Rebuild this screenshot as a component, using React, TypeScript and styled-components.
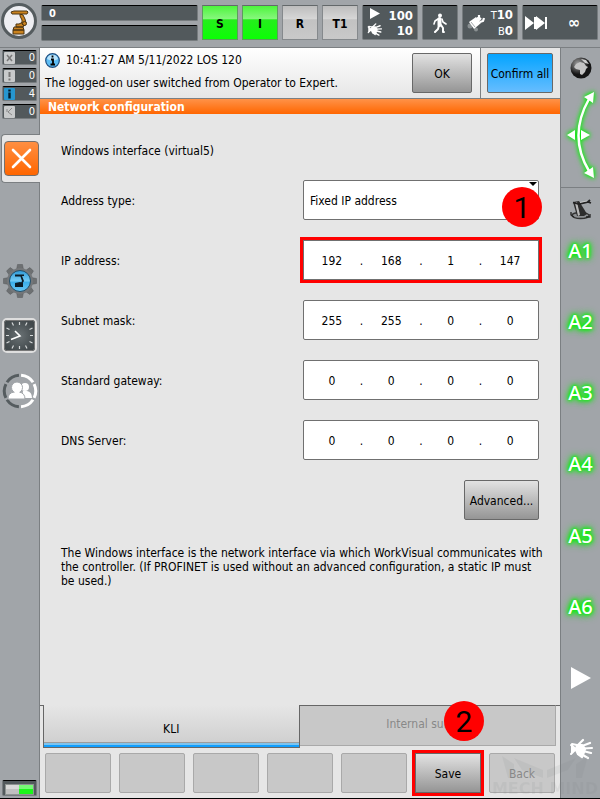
import React from "react";
import styled, { createGlobalStyle, css } from "styled-components";

const GlobalStyle = createGlobalStyle`
  * { box-sizing: border-box; }
  body {
    margin: 0;
    background: #a1a5a9;
    color: #000;
    font: 12px/14px "DejaVu Sans Condensed", "DejaVu Sans", sans-serif;
  }
  button, input, select { font: inherit; color: inherit; margin: 0; }
  svg { display: block; flex: none; }
`;

/* ---------- frame ---------- */

const Page = styled.div`
  display: flex;
  flex-direction: column;
  min-height: 100vh;
  border-bottom: 1px solid #000;
`;

const TopBar = styled.header`
  display: flex;
  align-items: flex-start;
  gap: 4px;
  padding: 5px 2px 6px;
  border-bottom: 1px solid #7b7f82;
`;

const Body = styled.div`
  display: flex;
  flex: 1;
`;

/* ---------- status bar ---------- */

const HomeButton = styled.button`
  width: 36px;
  height: 36px;
  margin: -2px 0 0 -1px;
  padding: 0;
  border: 3px solid #555c5f;
  border-radius: 50%;
  background: #eeeef2;
`;

const darkPanel = css`
  background: #52595c;
  border: 1px solid #777c7f;
  border-top: 1px solid #000;
  border-radius: 2px;
  color: #fff;
`;

const Submit = styled.div`
  display: flex;
  flex: 1;
  flex-direction: column;
  gap: 4px;
`;

const SubmitLine = styled.div`
  ${darkPanel}
  height: 16px;
  padding-left: 7px;
  font-weight: bold;
  font-size: 11px;
  line-height: 15px;
`;

const StateButton = styled.button<{ $on?: boolean }>`
  width: 36px;
  height: 35px;
  padding: 2px 0 0;
  border: 1px solid ${(p) => (p.$on ? "#5f9a5f" : "#85898c")};
  border-top-color: #63686a;
  background: ${(p) =>
    p.$on
      ? "linear-gradient(#4df53c 0%, #86f77c 38%, #25ee1c 42%, #0cff06 100%)"
      : "linear-gradient(#bdbdbd 0%, #d6d6d6 38%, #c2c2c2 42%, #c9c9c9 100%)"};
  font-weight: bold;
`;

const StatusPanel = styled.button<{ $w: number }>`
  ${darkPanel}
  display: flex;
  align-items: center;
  justify-content: space-between;
  width: ${(p) => p.$w}px;
  height: 35px;
  padding: 0 4px;
  font-weight: bold;
`;

const Centered = styled(StatusPanel)`
  justify-content: center;
`;

const JogPanel = styled(StatusPanel)`
  padding: 0 17px 0 2px;
  font-size: 16px;
`;

const Pair = styled.span`
  display: flex;
  flex-direction: column;
  align-items: flex-end;
  line-height: 15px;
  font-size: 13px;

  small { font-size: 11px; font-weight: normal; }
`;

const IconStack = styled.span`
  display: flex;
  flex-direction: column;
  align-items: center;
  gap: 3px;
`;

/* ---------- left column ---------- */

const LeftBar = styled.aside`
  display: flex;
  flex-direction: column;
  width: 40px;
  padding: 2px 0;
  border-right: 1px solid #7b7f82;
`;

const Counters = styled.div`
  display: flex;
  flex-direction: column;
  gap: 3px;
  padding: 0 2px;
`;

const Counter = styled.div`
  ${darkPanel}
  display: flex;
  justify-content: space-between;
  align-items: center;
  height: 15px;
  padding-right: 1px;
  font-size: 11px;
`;

const CloseTab = styled.div`
  margin: 15px -1px 0 1px;
  padding: 6px 0 6px 2px;
  border: 1px solid #7b7f82;
  border-right: 0;
  border-radius: 4px 0 0 4px;
  background: #e6e6e6;
`;

const CloseButton = styled.button`
  display: grid;
  place-items: center;
  width: 35px;
  height: 35px;
  padding: 0;
  border: 1px solid #76706c;
  border-radius: 4px;
  background: linear-gradient(#ff8f42, #ff6600);
`;

const SideIcons = styled.nav`
  display: flex;
  flex-direction: column;
  align-items: center;
  gap: 20px;
  padding: 81px 0 0;
`;

const IconButton = styled.button`
  display: grid;
  place-items: center;
  padding: 0;
  border: 0;
  background: none;
`;

const Charge = styled.div`
  ${darkPanel}
  height: 16px;
  margin: auto 2px 0;
  padding: 3px 2px;

  &::before {
    content: "";
    display: block;
    height: 9px;
    border: 1px solid #8d9391;
    background: linear-gradient(#fff6 40%, #fff0 50%), linear-gradient(90deg, #c0c0c0 50%, #1bf51b 50%);
  }
`;

/* ---------- centre ---------- */

const Main = styled.main`
  display: flex;
  flex: 1;
  flex-direction: column;
  min-width: 0;
  background: #e6e6e6;
`;

const MessageBar = styled.section`
  display: flex;
  border-bottom: 1px solid #7b7f82;
  background: linear-gradient(#fff, #e6e6e6);
`;

const Message = styled.div`
  flex: 1;
  padding: 4px 5px 0;
  line-height: 23px;
`;

const MessageTime = styled.div`
  display: flex;
  align-items: center;
  gap: 6px;
  height: 17px;
  margin-bottom: 3px;
`;

const MessageAction = styled.div<{ $divided?: boolean }>`
  padding: 5px ${(p) => (p.$divided ? 7 : 8)}px 5px 6px;
  border-left: ${(p) => (p.$divided ? "1px solid #7b7f82" : "0")};
  background: ${(p) => (p.$divided ? "#e6e6e6" : "none")};
`;

const Button = styled.button<{ $w?: number; $tone?: "blue" | "flat"; $marked?: boolean }>`
  width: ${(p) => (p.$w ? `${p.$w}px` : "auto")};
  height: 40px;
  padding: 2px 0 0;
  border: 1px solid #686868;
  border-radius: ${(p) => (p.$marked ? 0 : 2)}px;
  background: linear-gradient(#e2e2e2, #959595);
  ${(p) => p.$tone === "blue" && css`background: linear-gradient(#04a4ff, #66bdff);`}
  ${(p) =>
    p.$tone === "flat" &&
    css`
      border-color: #a9a9a9;
      background: #c8c8c8;
      color: #888;
    `}
  ${(p) => p.$marked && css`box-shadow: 0 0 0 3px #f00;`}
`;

const Title = styled.h1`
  margin: 0;
  padding: 1px 8px 0;
  background: linear-gradient(#ff9248, #ff6600);
  color: #fff;
  font-size: 12px;
  line-height: 14px;
`;

const Form = styled.form`
  display: flex;
  flex: 1;
  flex-direction: column;
  gap: 20px;
  padding: 30px 21px 20px;
`;

const Heading = styled.h2`
  margin: 0 0 2px;
  font-size: 12px;
  font-weight: normal;
  line-height: 14px;
`;

const Row = styled.div`
  display: flex;
  align-items: center;
  justify-content: space-between;
`;

const Label = styled.label`
  padding-top: 2px;
`;

const Field = styled.div`
  position: relative;
  width: 236px;
`;

const fieldBox = css`
  width: 100%;
  height: 40px;
  border: 1px solid #707070;
  border-radius: 2px;
  background: #fff;
`;

const Select = styled.select`
  ${fieldBox}
  appearance: none;
  display: block;
  padding: 2px 6px 0;
`;

const Caret = styled.svg`
  position: absolute;
  top: 2px;
  right: 2px;
`;

const Address = styled.div<{ $marked?: boolean }>`
  ${fieldBox}
  display: grid;
  grid-template-columns: repeat(7, 1fr);
  align-items: center;
  padding: 2px 13px 0;
  text-align: center;
  ${(p) =>
    p.$marked &&
    css`
      border-radius: 0;
      box-shadow: 0 0 0 3px #f00;
    `}
`;

const Octet = styled.input`
  width: 100%;
  min-width: 0;
  padding: 0;
  border: 0;
  background: none;
  text-align: center;
`;

const Actions = styled.div`
  display: flex;
  justify-content: flex-end;
`;

const Note = styled.p`
  margin: 6px -6px 0 0;
`;

const StepBadge = styled.span<{ $top: number; $right: number }>`
  position: absolute;
  top: ${(p) => p.$top}px;
  right: ${(p) => p.$right}px;
  z-index: 1;
  width: 40px;
  height: 40px;
  border-radius: 50%;
  background: #f00;
  color: #000;
  font: 30px/42px Roboto, sans-serif;
  text-align: center;
`;

const Tabs = styled.div`
  display: flex;
  align-items: flex-start;
  padding: 0 4px 0 3px;
  background: linear-gradient(#666, #666) 0 0 / 3px 1px no-repeat,
    linear-gradient(#666, #666) 100% 0 / 4px 1px no-repeat;
`;

const Tab = styled.button<{ $active?: boolean }>`
  flex: 1;
  height: 41px;
  padding: 0 0 4px;
  border: 1px solid #a9a9a9;
  border-top-color: #666;
  border-left: 0;
  background: #c8c8c8;
  color: #888;
  ${(p) =>
    p.$active &&
    css`
      height: 43px;
      padding: 5px 0 0;
      border: 1px solid #666;
      border-top: 0;
      background: linear-gradient(#9c9c9c 1px, #7cc3ee 1px, #7cc3ee 3px, #109fff 3px) 0 100% / 100% 5px no-repeat,
        linear-gradient(#e6e6e6, #cdcdcd);
      color: #000;
    `}
`;

const TabSlot = styled.div`
  position: relative;
  display: flex;
  flex: 1;
`;

const SoftKeys = styled.footer`
  display: grid;
  grid-template-columns: repeat(7, 1fr);
  gap: 8px;
  padding: 5px 5px;
`;

/* ---------- right column ---------- */

const RightBar = styled.aside`
  position: relative;
  display: flex;
  flex-direction: column;
  width: 40px;
  border-left: 1px solid #7b7f82;
`;

const JogSection = styled.div`
  display: flex;
  flex-direction: column;
  align-items: center;
  gap: 8px;
  padding: 9px 0 2px;
  border-bottom: 1px solid #7b7f82;
`;

const JogDrawing = styled.svg`
  filter: drop-shadow(0 0 2px #0ce60c) drop-shadow(0 0 2px #1ef01e);
`;

const RobotSection = styled.div`
  display: grid;
  place-items: center;
  padding-top: 10px;
`;

const AxisList = styled.div`
  display: flex;
  flex: 1;
  flex-direction: column;
  align-items: center;
  justify-content: space-between;
  padding: 14px 0 34px;
`;

const Axis = styled.span`
  color: #fff;
  font: 500 20px/30px "Noto Sans", sans-serif;
  text-shadow: 0 0 3px #10f010, 0 0 4px #10f010, 0 0 5px #10f010, 0 0 7px #1ee61e, 0 0 10px #1ee61e;
`;

const AxisButton = styled(IconButton)`
  height: 30px;
`;

const Watermark = styled.div`
  position: absolute;
  right: 2px;
  bottom: 0;
  display: flex;
  flex-direction: column;
  align-items: center;
  color: #7b7f82;
  font: bold 16px/18px "DejaVu Sans", sans-serif;
  white-space: nowrap;
  opacity: 0.1;
  pointer-events: none;
`;

/* ---------- drawings ---------- */

const RobotGlyph = () => (
  <svg width="30" height="30" viewBox="0 0 30 30" fill="#c9821f" stroke="#4a3413" strokeWidth="1">
    <path d="M9 24h11v4H9zM10 21h9l1 3H9zM12 18h3l4-2 2 2-2 3h-7z" />
    <path d="M16 8l3 1 2 4 1 4-2 3-2-2v-4l-2-4z" />
    <path d="M7 6l3-1h13l1 1-1 2H8z" />
    <circle cx="20.500" cy="17.500" r="2" />
  </svg>
);

const HandGlyph = ({ size }: { size: number }) => (
  <svg width={size} height={size} viewBox="0 0 24 24" fill="none" stroke="#fff" strokeWidth="2.200" strokeLinecap="round" strokeLinejoin="round">
    <path d="M8 8h5l3 4-2 6-5-1-2-4z" fill="#fff" />
    <path d="M9 8l5-5M13 9l8-3M14 11.500l9-.5M14 14l8 2M12 17l7 4M9 17l4 3" />
    <path d="M2 8l5 4-5 5M3 7l5 1" strokeWidth="2" />
    <path d="M2 8l5 4-5 5z" fill="#fff" stroke="none" />
  </svg>
);

const PlayGlyph = ({ w, h }: { w: number; h: number }) => (
  <svg width={w} height={h} viewBox="0 0 20 22" fill="#fff">
    <path d="M0 0l20 11L0 22z" />
  </svg>
);

const WalkGlyph = () => (
  <svg width="14" height="20" viewBox="0 0 14 20" fill="none" stroke="#fff" strokeLinecap="round" strokeLinejoin="round">
    <circle cx="7" cy="2.500" r="2" fill="#fff" stroke="none" />
    <path d="M6.500 6v6" strokeWidth="4" />
    <path d="M5 6L2 8l-1 3M9 6l1 3 3 2" strokeWidth="1.600" />
    <path d="M6 12l-1 4-3 3M8 12l2 3v4h1" strokeWidth="2" />
  </svg>
);

const ToolGlyph = () => (
  <svg width="18" height="18" viewBox="0 0 18 18">
    <circle cx="3" cy="12" r="2.500" fill="#8a9092" />
    <circle cx="9" cy="15.500" r="2" fill="#8a9092" />
    <path d="M2 8l7-5 5 6-7 6z" fill="#fff" />
    <path d="M10 5l2-2V1M13 8l3-1 1-3M11 7l3-3" fill="none" stroke="#fff" strokeWidth="2.200" />
    <path d="M4 8l4 5" stroke="#a5aaac" />
  </svg>
);

const StepGlyph = () => (
  <svg width="22" height="14" viewBox="0 0 22 14" fill="#fff">
    <path d="M0 0l9 7-9 7zM9 1h2v12H9zM11 0l9 7-9 7zM20 1h2v12h-2z" />
  </svg>
);

const CounterGlyph = ({ kind }: { kind: "x" | "!" | "i" | "<" }) => (
  <svg width="12" height="12" viewBox="0 0 12 12">
    <rect x="1" y="0" width="11" height="12" rx="1" fill={kind === "i" ? "#2696d0" : "#c8cacb"} />
    {kind === "x" && <path d="M4 3l5 6M9 3L4 9" stroke="#777" strokeWidth="1.500" />}
    {kind === "!" && <path d="M6.500 2v5M6.500 8.500v2" stroke="#777" strokeWidth="2" />}
    {kind === "i" && <path d="M6.500 1.500v2M6.500 4.500v6" stroke="#001c2c" strokeWidth="2.400" fill="none" />}
    {kind === "<" && <path d="M9 2L5 6l4 3M4 3v3" stroke="#888" fill="none" />}
  </svg>
);

const InfoGlyph = () => (
  <svg width="15" height="15" viewBox="0 0 15 15">
    <circle cx="7.500" cy="7.500" r="6.800" fill="#5cbcf4" stroke="#1c4d80" strokeWidth="1.200" />
    <path d="M2 6a5.700 5.700 0 0 1 11 0q-5 3-11 0z" fill="#b9e3fb" />
    <path d="M7.500 2.500v2M6 6.500h2V11M5.500 11.500h4.500" stroke="#000" strokeWidth="1.800" fill="none" />
  </svg>
);

const GearGlyph = () => (
  <svg width="34" height="34" viewBox="0 0 34 34">
    <defs>
      <linearGradient id="sky" x2="0" y2="1">
        <stop offset="0" stopColor="#2e9ad8" />
        <stop offset="0.500" stopColor="#73cbf5" />
        <stop offset="0.550" stopColor="#3aaeea" />
        <stop offset="1" stopColor="#69c8f6" />
      </linearGradient>
    </defs>
    <g fill="#6d7072" stroke="#56595b" strokeWidth="0.500">
      {[0, 45, 90, 135, 180, 225, 270, 315].map((a) => (
        <path key={a} d="M13.500 6l1-5.500h5L20.500 6z" transform={`rotate(${a} 17 17)`} />
      ))}
    </g>
    <circle cx="17" cy="17" r="13" fill="#74777a" />
    <circle cx="17" cy="17" r="10.500" fill="url(#sky)" stroke="#254f68" />
    <path d="M12 10.500h9v1.500h-2l2 5-2 3-1-1 1-2-1.500-4.500H12z" fill="#0c1d28" />
    <path d="M12 19l5-1 3 1v4h-8z" fill="#0c1d28" />
  </svg>
);

const ClockGlyph = () => (
  <svg width="35" height="35" viewBox="0 0 35 35">
    <defs>
      <radialGradient id="dial">
        <stop offset="0" stopColor="#697174" />
        <stop offset="1" stopColor="#42494c" />
      </radialGradient>
    </defs>
    <rect x="1" y="1" width="33" height="33" rx="4" fill="url(#dial)" stroke="#dedede" strokeWidth="2" />
    <rect x="2.500" y="2.500" width="30" height="30" rx="2" fill="none" stroke="#777" />
    <path
      d="M17.500 4v3M17.500 28v3M4 17.500h3M28 17.500h3M10 4.500l1.500 3M25 4.500l-1.500 3M10 30.500l1.500-3M25 30.500l-1.500-3M4.500 10l3 1.500M4.500 25l3-1.500M30.500 10l-3 1.500M30.500 25l-3-1.500"
      stroke="#d6d9da"
      strokeWidth="1.200"
    />
    <path d="M13 13l5 5-9 3.500" fill="none" stroke="#fff" strokeWidth="1.600" />
  </svg>
);

const arcs = [
  { start: 4, color: "#fff" },
  { start: 64, color: "#fff" },
  { start: 124, color: "#fff" },
  { start: 184, color: "#555c5f" },
  { start: 244, color: "#555c5f" },
  { start: 304, color: "#555c5f" },
];

const UsersGlyph = () => (
  <svg width="36" height="36" viewBox="0 0 36 36">
    <g fill="none" strokeWidth="3">
      {arcs.map((a) => (
        <circle
          key={a.start}
          cx="18"
          cy="18"
          r="15.700"
          stroke={a.color}
          strokeDasharray="14.200 200"
          transform={`rotate(${a.start - 90} 18 18)`}
        />
      ))}
    </g>
    <g fill="#fff">
      <circle cx="23" cy="14" r="4" />
      <path d="M21 18h4q5 1 5 7H20z" />
      <g stroke="#a1a5a9" strokeWidth="1">
        <path d="M6 26q0-6 6-7h5q6 1 6 7z" />
        <circle cx="15" cy="14.500" r="5.500" />
      </g>
      <path d="M12.500 17h5v4h-5z" />
    </g>
  </svg>
);

const GlobeGlyph = () => (
  <svg width="22" height="22" viewBox="0 0 22 22">
    <defs>
      <radialGradient id="ball" cx="0.350" cy="0.300">
        <stop offset="0" stopColor="#a2a2a2" />
        <stop offset="1" stopColor="#151515" />
      </radialGradient>
    </defs>
    <circle cx="11" cy="11" r="10.500" fill="url(#ball)" />
    <path d="M6 7l4-2 4 1 2 3 2 1-2 2-1 3-3 3-2-1v-4l-4-1-2-2z" fill="#c4c4c4" />
    <path d="M11 2l5 1 3 4-4-1-2-2z" fill="#f2f2f2" opacity="0.800" />
  </svg>
);

const JogGlyph = () => (
  <JogDrawing width="40" height="98" viewBox="0 0 40 98">
    <path d="M28 12Q7 49 28 84" fill="none" stroke="#fff" strokeWidth="2.500" />
    <path d="M33 5l-1 11-9-6zM33 91l-1-11-9 6zM6 48l8-5v10zM29 48l-9-5v10z" fill="#fff" />
  </JogDrawing>
);

const JogRobotGlyph = () => (
  <svg width="24" height="24" viewBox="0 0 24 24">
    <ellipse cx="11.500" cy="17.500" rx="8.500" ry="3" fill="#8c8f92" stroke="#333" strokeWidth="1.300" />
    <path d="M4 4l6-1 8 13-3 2H8z" fill="#2d2d2d" />
    <path d="M6 5l2-1 3 13-2 1z" fill="#b9b9b9" />
    <path d="M4 4.500l6 1.500 9-2 2-2M19 4l3 1" fill="none" stroke="#222" strokeWidth="1.800" />
    <path d="M11 4.500l7-1.500" stroke="#d5d5d5" strokeWidth="0.800" />
    <path d="M2 14v3l3 2M21 16v3h-4" fill="none" stroke="#222" strokeWidth="1.300" />
  </svg>
);

/* ---------- data ---------- */

const addresses = [
  { label: "IP address:", octets: ["192", "168", "1", "147"], marked: true },
  { label: "Subnet mask:", octets: ["255", "255", "0", "0"] },
  { label: "Standard gateway:", octets: ["0", "0", "0", "0"] },
  { label: "DNS Server:", octets: ["0", "0", "0", "0"] },
];

const counters = [
  ["x", 0],
  ["!", 0],
  ["i", 4],
  ["<", 0],
] as const;

function AddressRow({ label, octets, marked }: { label: string; octets: string[]; marked?: boolean }) {
  const id = label.replace(/\W/g, "");
  return (
    <Row>
      <Label htmlFor={id}>{label}</Label>
      <Field>
        <Address $marked={marked}>
          {octets.map((o, i) => (
            <React.Fragment key={i}>
              {i > 0 && <span>.</span>}
              <Octet id={i === 0 ? id : undefined} aria-label={i ? `${label} ${i + 1}` : undefined} defaultValue={o} />
            </React.Fragment>
          ))}
        </Address>
      </Field>
    </Row>
  );
}

export default function App() {
  return (
    <Page>
      <GlobalStyle />
      <TopBar>
        <HomeButton aria-label="Main menu">
          <RobotGlyph />
        </HomeButton>
        <Submit>
          <SubmitLine>0</SubmitLine>
          <SubmitLine />
        </Submit>
        <StateButton $on>S</StateButton>
        <StateButton $on>I</StateButton>
        <StateButton>R</StateButton>
        <StateButton>T1</StateButton>
        <StatusPanel $w={56}>
          <IconStack>
            <PlayGlyph w={10} h={11} />
            <HandGlyph size={15} />
          </IconStack>
          <Pair>
            <span>100</span>
            <span>10</span>
          </Pair>
        </StatusPanel>
        <Centered $w={36} aria-label="Walk">
          <WalkGlyph />
        </Centered>
        <StatusPanel $w={56}>
          <ToolGlyph />
          <Pair>
            <span><small>T</small>10</span>
            <span><small>B</small>0</span>
          </Pair>
        </StatusPanel>
        <JogPanel $w={76}>
          <StepGlyph />
          <span>∞</span>
        </JogPanel>
      </TopBar>

      <Body>
        <LeftBar>
          <Counters>
            {counters.map(([kind, n]) => (
              <Counter key={kind}>
                <CounterGlyph kind={kind} />
                <span>{n}</span>
              </Counter>
            ))}
          </Counters>
          <CloseTab>
            <CloseButton aria-label="Close">
              <svg width="21" height="21" viewBox="0 0 21 21" stroke="#fff" strokeWidth="2.600" strokeLinecap="round">
                <path d="M2 2l17 17M19 2L2 19" />
              </svg>
            </CloseButton>
          </CloseTab>
          <SideIcons>
            <IconButton aria-label="Settings"><GearGlyph /></IconButton>
            <IconButton aria-label="Clock"><ClockGlyph /></IconButton>
            <IconButton aria-label="Users"><UsersGlyph /></IconButton>
          </SideIcons>
          <Charge />
        </LeftBar>

        <Main>
          <MessageBar>
            <Message>
              <MessageTime>
                <InfoGlyph />
                <span>10:41:27 AM 5/11/2022 LOS 120</span>
              </MessageTime>
              <div>The logged-on user switched from Operator to Expert.</div>
            </Message>
            <MessageAction><Button $w={60}>OK</Button></MessageAction>
            <MessageAction $divided><Button $w={66} $tone="blue">Confirm all</Button></MessageAction>
          </MessageBar>
          <Title>Network configuration</Title>

          <Form>
            <Heading>Windows interface (virtual5)</Heading>
            <Row>
              <Label htmlFor="type">Address type:</Label>
              <Field>
                <Select id="type" defaultValue="fixed">
                  <option value="fixed">Fixed IP address</option>
                </Select>
                <Caret width="8" height="4" viewBox="0 0 8 4"><path d="M0 0h8L4 4z" /></Caret>
                <StepBadge $top={7} $right={-3}>1</StepBadge>
              </Field>
            </Row>
            {addresses.map((a) => (
              <AddressRow key={a.label} {...a} />
            ))}
            <Actions><Button type="button" $w={75}>Advanced...</Button></Actions>
            <Note>
              The Windows interface is the network interface via which WorkVisual communicates with the controller. (If
              PROFINET is used without an advanced configuration, a static IP must be used.)
            </Note>
          </Form>

          <Tabs>
            <TabSlot><Tab $active>KLI</Tab></TabSlot>
            <TabSlot>
              <Tab>Internal subnet</Tab>
              <StepBadge $top={-4} $right={72}>2</StepBadge>
            </TabSlot>
          </Tabs>
          <SoftKeys>
            {[0, 1, 2, 3, 4].map((n) => (
              <Button key={n} $tone="flat" disabled aria-label="Unassigned" />
            ))}
            <Button $marked>Save</Button>
            <Button $tone="flat">Back</Button>
          </SoftKeys>
        </Main>

        <RightBar>
          <JogSection>
            <GlobeGlyph />
            <JogGlyph />
          </JogSection>
          <RobotSection><JogRobotGlyph /></RobotSection>
          <AxisList>
            {["A1", "A2", "A3", "A4", "A5", "A6"].map((a) => (
              <Axis key={a}>{a}</Axis>
            ))}
            <AxisButton aria-label="Start"><PlayGlyph w={20} h={22} /></AxisButton>
            <AxisButton aria-label="Jog by hand"><HandGlyph size={24} /></AxisButton>
          </AxisList>
          <Watermark>
            <svg width="86" height="24" viewBox="0 0 86 24" fill="#7b7f82">
              <path d="M0 0l12 8v14H6zM12 2l29 12v8L20 14zM86 0l-12 8v14h6zM74 2L45 14v8l21-8z" />
            </svg>
            MECH MIND
          </Watermark>
        </RightBar>
      </Body>
    </Page>
  );
}
